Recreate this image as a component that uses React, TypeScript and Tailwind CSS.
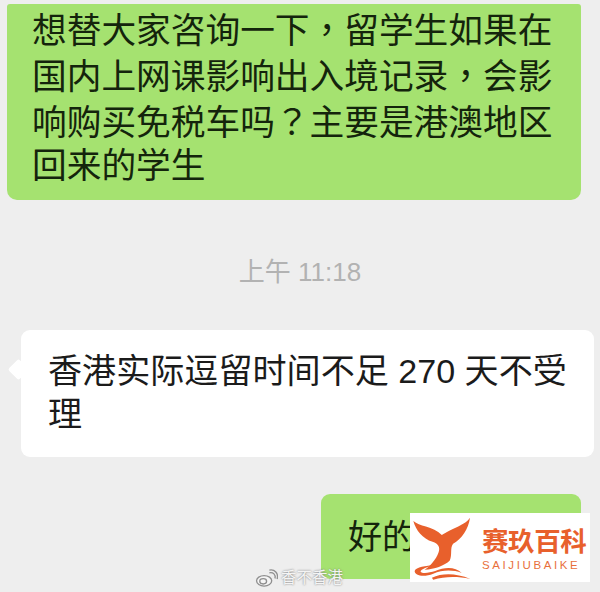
const cjk = "font-['Liberation_Sans','Noto_Sans_CJK_SC',sans-serif]"

// 全角标点在参考图里是居中的，繁体字形才是这样
function Punct({ children }: { children: string }) {
  return <span className="font-['Noto_Sans_CJK_TC',sans-serif]">{children}</span>
}

function Whale() {
  return (
    <svg width="63" height="67" viewBox="30 35 190 200" className="shrink-0">
      <path d="M40 55 C48 84 68 108 98 118 C116 124 122 136 116 150 C108 172 92 190 74 202 C104 200 134 190 150 174 C158 158 150 136 160 124 C186 108 206 80 211 45 C196 66 170 72 150 84 C140 90 132 94 126 97 C112 84 96 78 78 72 C62 68 50 62 40 55 Z" fill="#e8602c" />
      <path d="M104 188 C78 190 48 194 44 206 C44 220 72 226 100 214 C128 202 160 202 186 212 C166 192 134 194 106 206 C88 212 66 214 62 208 C62 200 84 194 104 188 Z" fill="#e8602c" />
      <path d="M96 226 C128 212 168 212 212 230 C174 222 136 222 100 232 Z" fill="#e8602c" />
    </svg>
  )
}

function WeiboIcon() {
  return (
    <svg width="23" height="18" viewBox="0 0 24 19" fill="none" stroke="#8f8f8f" strokeWidth="1.4">
      <ellipse cx="9.5" cy="12.5" rx="8" ry="5.5" fill="#f5f5f5" />
      <ellipse cx="8.5" cy="13" rx="3.6" ry="2.8" />
      <path d="M15 4 C19 3 22 6 21 10" />
      <path d="M15 1.2 C20.5 0 25 4.5 23.2 10.5" />
    </svg>
  )
}

export default function App() {
  return (
    <div className={`relative w-[600px] h-[592px] overflow-hidden bg-[#eeeeee] ${cjk}`}>
      <div className="flex flex-col pt-1">
        {/* 第一条：绿色气泡 */}
        <div className="ml-[7px] w-[574px] h-[196px] rounded-b-[10px] rounded-t-[3px] bg-[#a5e270] pl-[25px] pr-[20px] pt-[3px] text-[34.7px] leading-[43px] text-[#14240c]">
          <p>
            想替大家咨询一下<Punct>，</Punct>留学生如果在
            <br />
            国内上网课影响出入境记录<Punct>，</Punct>会影
            <br />
            响购买免税车吗<Punct>？</Punct>主要是港澳地区
            <br />
            回来的学生
          </p>
        </div>

        <div className="mt-[50px] h-[44px] flex items-center justify-center text-[26px] text-[#b2b2b2]">
          上午 11:18
        </div>

        {/* 对方回复 */}
        <div className="relative mt-[36px] ml-[21px] w-[573px] h-[127px] rounded-[9px] bg-white pl-[27px] pt-[20px] text-[34.1px] leading-[43px] text-[#1b1b1b]">
          <span className="absolute -left-[10px] top-[32px] size-[15px] rotate-45 rounded-[2px] bg-white" />
          <p>
            香港实际逗留时间不足 270 天不受
            <br />
            理
          </p>
        </div>

        {/* 好的 */}
        <div className="mt-[37px] ml-[321px] w-[260px] h-[85px] rounded-[9px] bg-[#a5e270] pl-[27px] pt-[22px] text-[34.1px] leading-[43px] text-[#14240c]">
          好的
        </div>
      </div>

      {/* 微博水印 */}
      <div className="absolute left-[255px] top-[568px] flex items-center gap-[3px] text-[15.5px] leading-[20px] text-[#f4f4f4] [text-shadow:0_0_2px_#6f6f6f]">
        <WeiboIcon />
        <span>香不香港</span>
      </div>

      {/* 赛玖百科 logo */}
      <div className="absolute left-[410px] top-[513px] w-[180px] h-[69px] bg-white flex items-center gap-[9px]">
        <Whale />
        <div className="flex flex-col items-start pt-[2px]">
          <span className="text-[26.5px] leading-[32px] font-bold text-[#e8602c] tracking-[-0.4px]">赛玖百科</span>
          <span className="text-[11.5px] leading-[14px] tracking-[2.6px] text-[#e8703c]">SAIJIUBAIKE</span>
        </div>
      </div>
    </div>
  )
}
